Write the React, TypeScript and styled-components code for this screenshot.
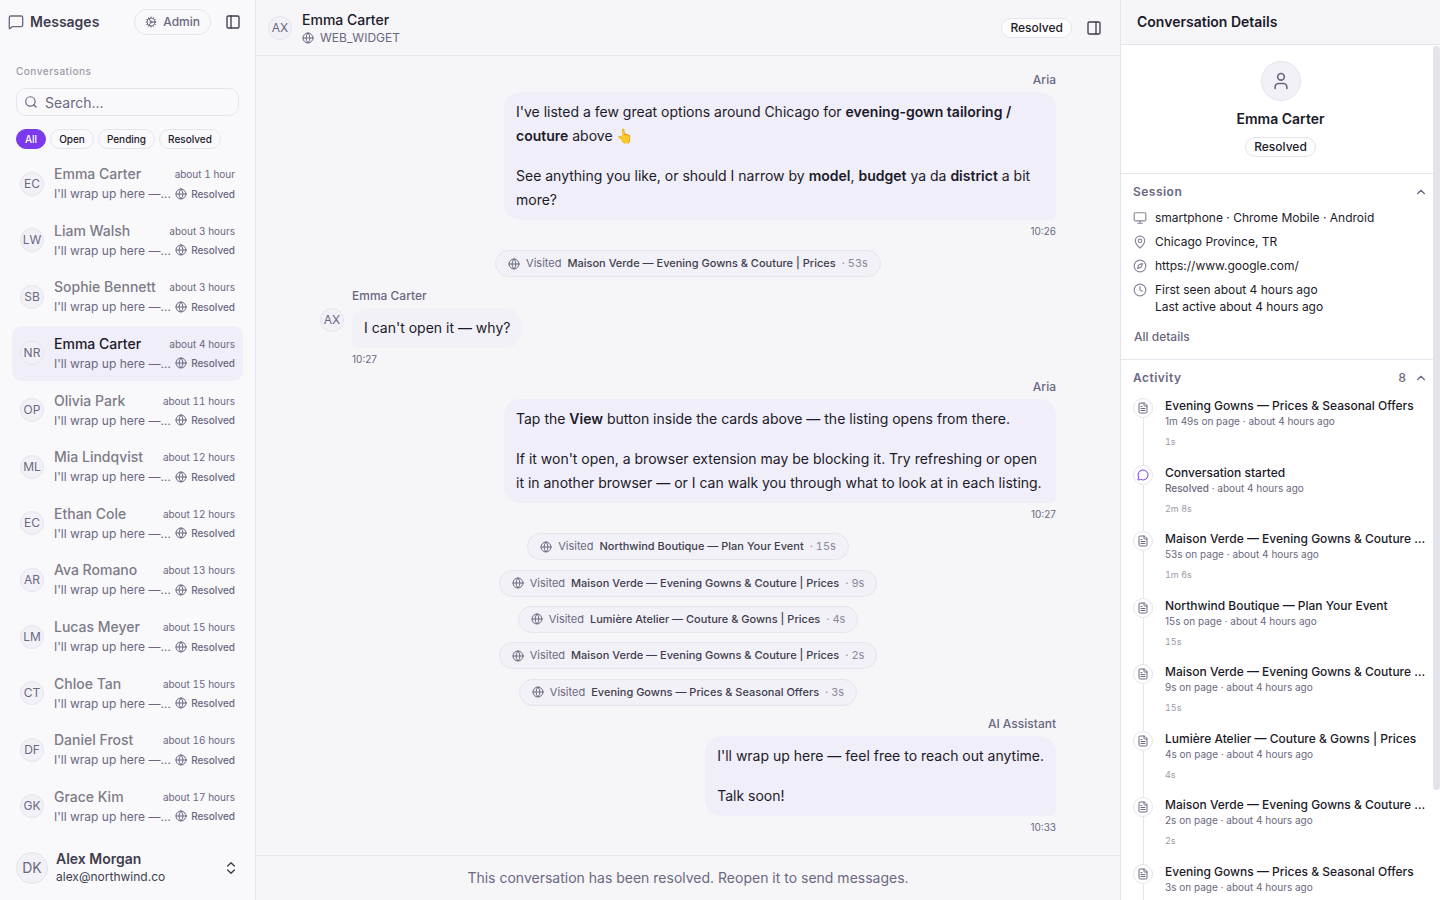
import React from "react";
import styled, { createGlobalStyle, css } from "styled-components";
import {
  ChevronsUpDown,
  ChevronUp,
  Clock,
  Cog,
  Compass,
  FileText,
  Globe,
  MapPin,
  MessageCircle,
  MessageSquare,
  Monitor,
  PanelLeft,
  PanelRight,
  Search,
  User,
} from "lucide-react";

const color = {
  ink: "#1c1a29",
  strong: "#3f3d4d",
  muted: "#6b6880",
  soften: "#8a889a",
  faint: "#9c9aa8",
  line: "#e4e4ec",
  sidebar: "#f9f9fc",
  canvas: "#f6f6f9",
  soft: "#f2f1f7",
  tint: "#f0eef8",
  accent: "#7c3aed",
};

const GlobalStyle = createGlobalStyle`
  *, *::before, *::after { box-sizing: border-box; }
  body {
    margin: 0;
    font-family: Inter, "Liberation Sans", sans-serif;
    font-size: 14px;
    line-height: 20px;
    color: ${color.ink};
    background: ${color.canvas};
  }
  button, input { font: inherit; color: inherit; margin: 0; }
  button { padding: 0; border: 0; background: none; cursor: pointer; }
  h1, h2, h3, p, ul, ol { margin: 0; padding: 0; font-size: inherit; font-weight: inherit; }
  ul, ol { list-style: none; }
  svg { flex: none; display: block; }
`;

const Shell = styled.div`
  display: grid;
  grid-template-columns: 256px minmax(0, 1fr) 320px;
  height: 100vh;
  overflow: hidden;
`;

const Sidebar = styled.nav`
  display: flex;
  flex-direction: column;
  min-height: 0;
  background: ${color.sidebar};
  border-right: 1px solid ${color.line};
`;

const SidebarHeader = styled.header`
  display: flex;
  align-items: center;
  height: 44px;
  padding: 0 14px 0 8px;
  color: ${color.muted};
`;

const SidebarTitle = styled.h1`
  flex: 1;
  padding-left: 6px;
  font-weight: 600;
  color: ${color.strong};
`;

const AdminButton = styled.button`
  display: flex;
  align-items: center;
  gap: 6px;
  height: 26px;
  margin-right: 14px;
  padding: 0 10px;
  border: 1px solid ${color.line};
  border-radius: 13px;
  font-size: 12px;
  font-weight: 500;
`;

const IconButton = styled.button`
  display: flex;
  color: ${color.strong};
`;

const Finder = styled.div`
  display: flex;
  flex-direction: column;
  padding: 19px 16px 7px;
`;

const FinderLabel = styled.h2`
  font-size: 10px;
  line-height: 16px;
  font-weight: 500;
  letter-spacing: 0.05em;
  color: ${color.faint};
`;

const SearchBox = styled.label`
  display: flex;
  align-items: center;
  gap: 7px;
  height: 28px;
  margin-top: 9px;
  padding: 0 7px;
  border: 1px solid ${color.line};
  border-radius: 10px;
  color: ${color.muted};
`;

const SearchInput = styled.input`
  flex: 1;
  min-width: 0;
  padding: 1px 0 0;
  border: 0;
  outline: 0;
  background: none;
  &::placeholder { color: ${color.muted}; opacity: 1; }
`;

const Filters = styled.div`
  display: flex;
  gap: 4px;
  margin-top: 13px;
`;

const FilterButton = styled.button<{ $active?: boolean }>`
  height: 20px;
  padding: 0 8px;
  border: 1px solid ${color.line};
  border-radius: 10px;
  font-size: 10px;
  line-height: 16px;
  font-weight: 500;
  ${(p) =>
    p.$active &&
    css`
      color: #fff;
      background: ${color.accent};
      border-color: ${color.accent};
    `}
`;

const ConversationList = styled.ul`
  flex: 1;
  display: flex;
  flex-direction: column;
  justify-content: space-between;
  min-height: 0;
  overflow: hidden;
  padding: 0 12px;
`;

const Row = styled.button<{ $active?: boolean }>`
  display: flex;
  align-items: center;
  gap: 10px;
  width: 100%;
  height: 55px;
  padding: 0 8px;
  border-radius: 10px;
  text-align: left;
  background: ${(p) => (p.$active ? color.tint : "transparent")};
`;

const Avatar = styled.span<{ $size?: number }>`
  flex: none;
  display: flex;
  align-items: center;
  justify-content: center;
  width: ${(p) => p.$size ?? 24}px;
  height: ${(p) => p.$size ?? 24}px;
  border: 1px solid ${color.line};
  border-radius: 50%;
  background: ${color.soft};
  color: ${color.muted};
  font-size: ${(p) => (p.$size ? 14 : 12)}px;
`;

const RowBody = styled.span`
  flex: 1;
  min-width: 0;
`;

const RowLine = styled.span`
  display: flex;
  align-items: center;
  justify-content: space-between;
  gap: 4px;
`;

const RowName = styled.span<{ $active?: boolean }>`
  line-height: 20px;
  font-weight: 500;
  color: ${(p) => (p.$active ? color.ink : "#7d7b87")};
`;

const RowTime = styled.span`
  font-size: 10px;
  line-height: 16px;
  font-variant-numeric: tabular-nums;
  color: ${color.muted};
`;

const RowPreview = styled.span`
  flex: 1;
  min-width: 0;
  overflow: hidden;
  white-space: nowrap;
  text-overflow: ellipsis;
  font-size: 12px;
  line-height: 19px;
  color: ${color.muted};
`;

const RowStatus = styled.span`
  display: flex;
  align-items: center;
  gap: 4px;
  font-size: 10px;
  line-height: 16px;
  font-weight: 500;
  color: ${color.muted};
`;

const Account = styled.button`
  display: flex;
  align-items: center;
  gap: 8px;
  margin-top: 8px;
  padding: 8px 16px 15px;
  text-align: left;
  color: ${color.strong};
`;

const AccountText = styled.span`
  flex: 1;
  display: flex;
  flex-direction: column;
`;

const AccountName = styled.span`
  line-height: 18px;
  font-weight: 600;
`;

const AccountMail = styled.span`
  font-size: 12px;
  line-height: 17px;
`;

const Main = styled.main`
  display: flex;
  flex-direction: column;
  min-width: 0;
  min-height: 0;
`;

const ChatHeader = styled.header`
  display: flex;
  align-items: center;
  gap: 10px;
  height: 56px;
  padding: 0 18px 0 12px;
  border-bottom: 1px solid ${color.line};
`;

const ChatTitle = styled.div`
  flex: 1;
`;

const ChatName = styled.h2`
  line-height: 20px;
  font-weight: 500;
`;

const ChatChannel = styled.p`
  display: flex;
  align-items: center;
  gap: 6px;
  font-size: 12px;
  line-height: 16px;
  color: ${color.muted};
`;

const Badge = styled.span`
  display: inline-block;
  padding: 0 8px;
  border: 1px solid ${color.line};
  border-radius: 10px;
  font-size: 12px;
  line-height: 18px;
  font-weight: 500;
  background: #fdfdfe;
`;

const HeaderActions = styled.div`
  display: flex;
  align-items: center;
  gap: 14px;
`;

const Thread = styled.section`
  flex: 1;
  display: flex;
  flex-direction: column;
  align-items: center;
  justify-content: space-between;
  min-height: 0;
  overflow: hidden;
  padding: 15px 64px 18px;
`;

const Message = styled.article<{ $own?: boolean }>`
  display: flex;
  flex-direction: column;
  align-items: ${(p) => (p.$own ? "flex-end" : "flex-start")};
  width: 100%;
  padding-bottom: 2px;
  padding-left: ${(p) => (p.$own ? 0 : 32)}px;
`;

const Author = styled.h3`
  margin-bottom: 4px;
  font-size: 12px;
  line-height: 17px;
  font-weight: 500;
  color: ${color.muted};
`;

const BubbleRow = styled.div`
  display: flex;
  gap: 8px;
  max-width: 75%;
`;

const GuestRow = styled(BubbleRow)`
  margin-left: -32px;
`;

const Bubble = styled.div<{ $own?: boolean }>`
  max-width: 552px;
  padding: 8px 12px;
  border-radius: ${(p) => (p.$own ? "16px 16px 6px 16px" : "16px 16px 16px 6px")};
  background: ${(p) => (p.$own ? color.tint : color.soft)};
  line-height: 24px;
  p + p { margin-top: 16px; }
  strong { font-weight: 600; }
`;

const Stamp = styled.time`
  margin-top: 3px;
  font-size: 10px;
  line-height: 16px;
  color: ${color.muted};
`;

const Visit = styled.p`
  display: flex;
  align-items: center;
  gap: 6px;
  padding: 4px 12px;
  border: 1px solid ${color.line};
  border-radius: 14px;
  background: ${color.soft};
  font-size: 11px;
  line-height: 17px;
  color: ${color.muted};
`;

const VisitPage = styled.span`
  font-weight: 500;
  color: ${color.strong};
`;

const VisitTime = styled.span`
  font-variant-numeric: tabular-nums;
  color: ${color.soften};
`;

const ChatFooter = styled.footer`
  padding: 12px 16px;
  border-top: 1px solid ${color.line};
  text-align: center;
  color: ${color.muted};
`;

const Details = styled.aside`
  display: flex;
  flex-direction: column;
  min-height: 0;
  border-left: 1px solid ${color.line};
`;

const DetailsHeader = styled.header`
  padding: 12px 16px;
  border-bottom: 1px solid ${color.line};
  font-weight: 600;
`;

const DetailsBody = styled.div`
  position: relative;
  flex: 1;
  min-height: 0;
  overflow: hidden;
  background: #fff;
`;

const ScrollThumb = styled.div`
  position: absolute;
  top: 1px;
  right: 0;
  width: 7px;
  height: 87%;
  border-radius: 4px;
  background: ${color.line};
`;

const Profile = styled.section`
  display: flex;
  flex-direction: column;
  align-items: center;
  gap: 8px;
  padding: 16px;
`;

const ProfileName = styled.h3`
  font-weight: 600;
`;

const Section = styled.section`
  padding: 8px 12px;
  border-top: 1px solid ${color.line};
`;

const SectionToggle = styled.button`
  display: flex;
  align-items: center;
  gap: 8px;
  width: 100%;
  font-size: 12px;
  line-height: 20px;
  font-weight: 600;
  color: ${color.muted};
`;

const SectionTitle = styled.span`
  flex: 1;
  text-align: left;
  letter-spacing: 0.04em;
`;

const SectionCount = styled.span`
  font-weight: 500;
  font-variant-numeric: tabular-nums;
`;

const Facts = styled.ul`
  display: flex;
  flex-direction: column;
  gap: 7px;
  padding-top: 7px;
`;

const Fact = styled.li`
  display: flex;
  gap: 8px;
  font-size: 12px;
  line-height: 17px;
  svg { margin-top: 2px; color: ${color.soften}; }
`;

const DetailsLink = styled.a`
  display: inline-block;
  margin: 13px 0 6px;
  padding: 0 1px;
  font-size: 12px;
  line-height: 17px;
  font-weight: 500;
  color: ${color.muted};
  text-decoration: none;
`;

const Timeline = styled.ol`
  padding-top: 10px;
`;

const Event = styled.li`
  display: flex;
  gap: 12px;
  height: 67px;
  &:nth-child(even) { height: 66px; }
`;

const Track = styled.span`
  display: flex;
  flex-direction: column;
  align-items: center;
  width: 20px;
  &::after {
    content: "";
    flex: 1;
    width: 1px;
    background: ${color.line};
  }
`;

const Dot = styled.span<{ $accent?: boolean }>`
  display: flex;
  align-items: center;
  justify-content: center;
  width: 20px;
  height: 20px;
  border: 1px solid ${color.line};
  border-radius: 50%;
  color: ${(p) => (p.$accent ? color.accent : color.muted)};
`;

const EventBody = styled.div`
  flex: 1;
  min-width: 0;
`;

const EventTitle = styled.p`
  overflow: hidden;
  white-space: nowrap;
  text-overflow: ellipsis;
  font-size: 12px;
  line-height: 16px;
  font-weight: 500;
`;

const EventMeta = styled.p`
  font-size: 10px;
  line-height: 15px;
  color: ${color.muted};
`;

const EventState = styled.span`
  font-weight: 500;
`;

const EventGap = styled.p`
  margin-top: 6px;
  font-size: 9px;
  line-height: 14px;
  font-variant-numeric: tabular-nums;
  color: ${color.faint};
`;

const conversations = [
  ["EC", "Emma Carter", "about 1 hour"],
  ["LW", "Liam Walsh", "about 3 hours"],
  ["SB", "Sophie Bennett", "about 3 hours"],
  ["NR", "Emma Carter", "about 4 hours"],
  ["OP", "Olivia Park", "about 11 hours"],
  ["ML", "Mia Lindqvist", "about 12 hours"],
  ["EC", "Ethan Cole", "about 12 hours"],
  ["AR", "Ava Romano", "about 13 hours"],
  ["LM", "Lucas Meyer", "about 15 hours"],
  ["CT", "Chloe Tan", "about 15 hours"],
  ["DF", "Daniel Frost", "about 16 hours"],
  ["GK", "Grace Kim", "about 17 hours"],
];

const MAISON = "Maison Verde — Evening Gowns & Couture | Prices";
const NORTHWIND = "Northwind Boutique — Plan Your Event";
const LUMIERE = "Lumière Atelier — Couture & Gowns | Prices";
const OFFERS = "Evening Gowns — Prices & Seasonal Offers";

const laterVisits = [
  [NORTHWIND, "15s"],
  [MAISON, "9s"],
  [LUMIERE, "4s"],
  [MAISON, "2s"],
  [OFFERS, "3s"],
];

const events = [
  { title: OFFERS, spent: "1m 49s", gap: "1s" },
  { title: "Conversation started", spent: "", gap: "2m 8s" },
  { title: MAISON, spent: "53s", gap: "1m 6s" },
  { title: NORTHWIND, spent: "15s", gap: "15s" },
  { title: MAISON, spent: "9s", gap: "15s" },
  { title: LUMIERE, spent: "4s", gap: "4s" },
  { title: MAISON, spent: "2s", gap: "2s" },
  { title: OFFERS, spent: "3s", gap: "" },
];

function VisitPill({ page, time }: { page: string; time: string }) {
  return (
    <Visit>
      <Globe size={12} />
      <span>Visited</span>
      <VisitPage>{page}</VisitPage>
      <VisitTime>· {time}</VisitTime>
    </Visit>
  );
}

function OwnMessage({ author, time, children }: { author: string; time: string; children: React.ReactNode }) {
  return (
    <Message $own>
      <Author>{author}</Author>
      <BubbleRow>
        <Bubble $own>{children}</Bubble>
      </BubbleRow>
      <Stamp>{time}</Stamp>
    </Message>
  );
}

export default function App() {
  return (
    <>
      <GlobalStyle />
      <Shell>
        <Sidebar>
          <SidebarHeader>
            <MessageSquare size={16} />
            <SidebarTitle>Messages</SidebarTitle>
            <AdminButton>
              <Cog size={12} />
              Admin
            </AdminButton>
            <IconButton aria-label="Toggle sidebar">
              <PanelLeft size={16} />
            </IconButton>
          </SidebarHeader>
          <Finder>
            <FinderLabel>Conversations</FinderLabel>
            <SearchBox>
              <Search size={14} />
              <SearchInput type="text" placeholder="Search..." aria-label="Search conversations" />
            </SearchBox>
            <Filters>
              <FilterButton $active>All</FilterButton>
              <FilterButton>Open</FilterButton>
              <FilterButton>Pending</FilterButton>
              <FilterButton>Resolved</FilterButton>
            </Filters>
          </Finder>
          <ConversationList>
            {conversations.map(([initials, name, time], i) => (
              <li key={i}>
                <Row $active={i === 3}>
                  <Avatar>{initials}</Avatar>
                  <RowBody>
                    <RowLine>
                      <RowName $active={i === 3}>{name}</RowName>
                      <RowTime>{time}</RowTime>
                    </RowLine>
                    <RowLine>
                      <RowPreview>I'll wrap up here — feel free to reach out anytime.</RowPreview>
                      <RowStatus>
                        <Globe size={12} />
                        Resolved
                      </RowStatus>
                    </RowLine>
                  </RowBody>
                </Row>
              </li>
            ))}
          </ConversationList>
          <Account>
            <Avatar $size={32}>DK</Avatar>
            <AccountText>
              <AccountName>Alex Morgan</AccountName>
              <AccountMail>alex@northwind.co</AccountMail>
            </AccountText>
            <ChevronsUpDown size={16} />
          </Account>
        </Sidebar>

        <Main>
          <ChatHeader>
            <Avatar>AX</Avatar>
            <ChatTitle>
              <ChatName>Emma Carter</ChatName>
              <ChatChannel>
                <Globe size={12} />
                WEB_WIDGET
              </ChatChannel>
            </ChatTitle>
            <HeaderActions>
              <Badge>Resolved</Badge>
              <IconButton aria-label="Toggle details">
                <PanelRight size={16} />
              </IconButton>
            </HeaderActions>
          </ChatHeader>
          <Thread>
            <OwnMessage author="Aria" time="10:26">
              <p>
                I've listed a few great options around Chicago for <strong>evening-gown tailoring / couture</strong>{" "}
                above 👆
              </p>
              <p>
                See anything you like, or should I narrow by <strong>model</strong>, <strong>budget</strong> ya da{" "}
                <strong>district</strong> a bit more?
              </p>
            </OwnMessage>
            <VisitPill page={MAISON} time="53s" />
            <Message>
              <Author>Emma Carter</Author>
              <GuestRow>
                <Avatar>AX</Avatar>
                <Bubble>
                  <p>I can't open it — why?</p>
                </Bubble>
              </GuestRow>
              <Stamp>10:27</Stamp>
            </Message>
            <OwnMessage author="Aria" time="10:27">
              <p>
                Tap the <strong>View</strong> button inside the cards above — the listing opens from there.
              </p>
              <p>
                If it won't open, a browser extension may be blocking it. Try refreshing or open it in another browser —
                or I can walk you through what to look at in each listing.
              </p>
            </OwnMessage>
            {laterVisits.map(([page, time]) => (
              <VisitPill key={time} page={page} time={time} />
            ))}
            <OwnMessage author="AI Assistant" time="10:33">
              <p>I'll wrap up here — feel free to reach out anytime.</p>
              <p>Talk soon!</p>
            </OwnMessage>
          </Thread>
          <ChatFooter>This conversation has been resolved. Reopen it to send messages.</ChatFooter>
        </Main>

        <Details>
          <DetailsHeader>Conversation Details</DetailsHeader>
          <DetailsBody>
            <Profile>
              <Avatar $size={40}>
                <User size={20} />
              </Avatar>
              <ProfileName>Emma Carter</ProfileName>
              <Badge>Resolved</Badge>
            </Profile>
            <Section>
              <SectionToggle>
                <SectionTitle>Session</SectionTitle>
                <ChevronUp size={14} />
              </SectionToggle>
              <Facts>
                <Fact>
                  <Monitor size={14} />
                  <span>smartphone · Chrome Mobile · Android</span>
                </Fact>
                <Fact>
                  <MapPin size={14} />
                  <span>Chicago Province, TR</span>
                </Fact>
                <Fact>
                  <Compass size={14} />
                  <span>https://www.google.com/</span>
                </Fact>
                <Fact>
                  <Clock size={14} />
                  <span>
                    First seen about 4 hours ago
                    <br />
                    Last active about 4 hours ago
                  </span>
                </Fact>
              </Facts>
              <DetailsLink href="#details">All details</DetailsLink>
            </Section>
            <Section>
              <SectionToggle>
                <SectionTitle>Activity</SectionTitle>
                <SectionCount>8</SectionCount>
                <ChevronUp size={14} />
              </SectionToggle>
              <Timeline>
                {events.map((event, i) => (
                  <Event key={i}>
                    <Track>
                      <Dot $accent={!event.spent}>
                        {event.spent ? <FileText size={12} /> : <MessageCircle size={12} />}
                      </Dot>
                    </Track>
                    <EventBody>
                      <EventTitle>{event.title}</EventTitle>
                      <EventMeta>
                        {event.spent ? `${event.spent} on page` : <EventState>Resolved</EventState>} · about 4 hours ago
                      </EventMeta>
                      <EventGap>{event.gap}</EventGap>
                    </EventBody>
                  </Event>
                ))}
              </Timeline>
            </Section>
            <ScrollThumb />
          </DetailsBody>
        </Details>
      </Shell>
    </>
  );
}
